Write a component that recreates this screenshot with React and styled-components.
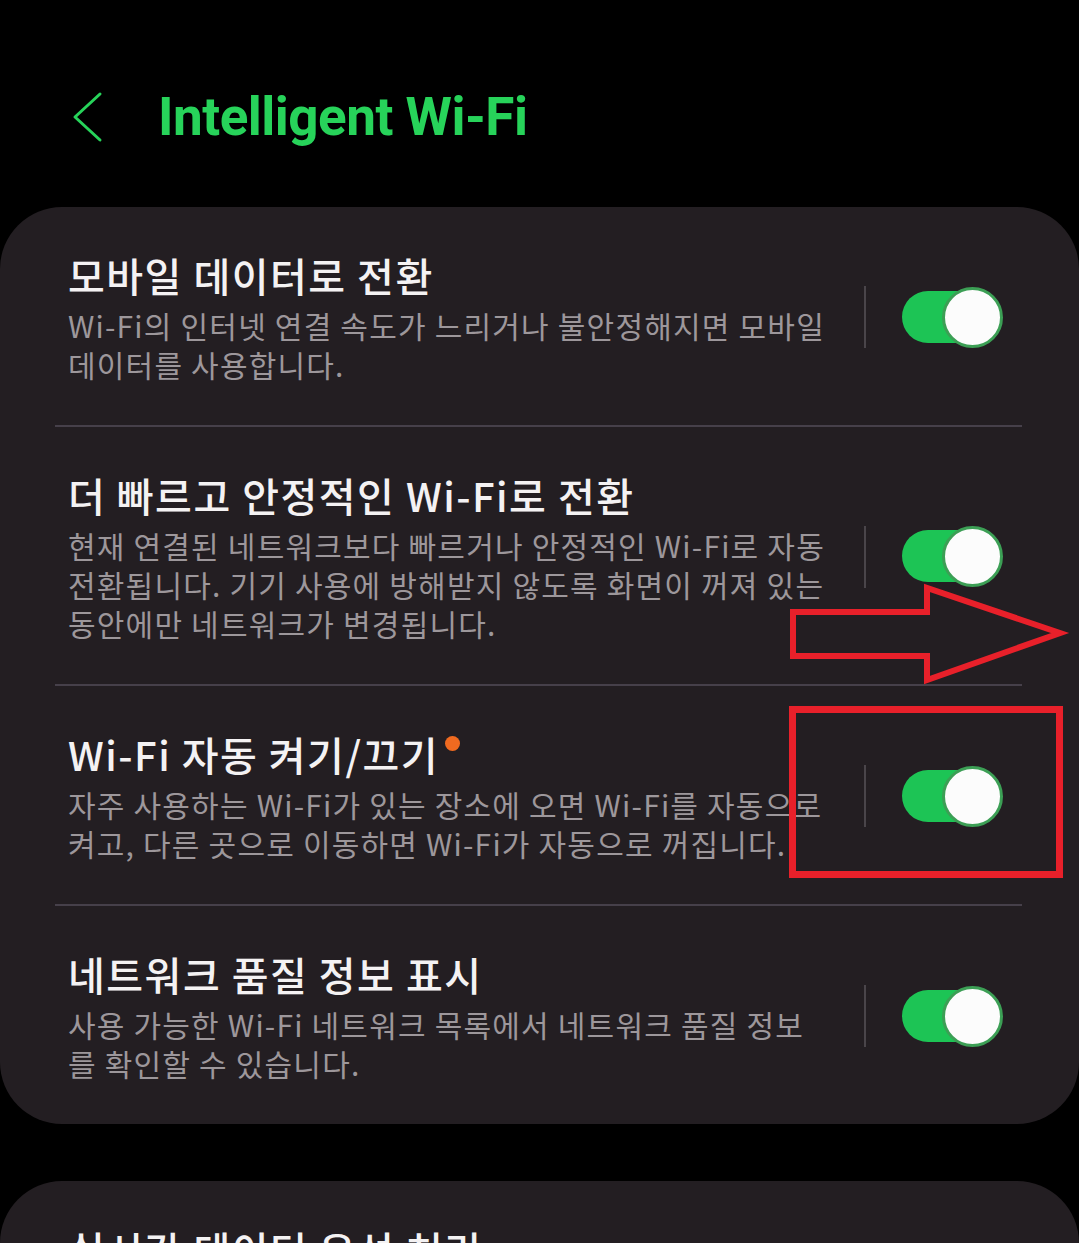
import React from 'react';
import styled, { createGlobalStyle } from 'styled-components';

const GlobalStyle = createGlobalStyle`
  html, body {
    margin: 0;
    padding: 0;
    background: #000;
    overflow: hidden;
  }
  body {
    font-family: 'Noto Sans CJK KR', 'Noto Sans', sans-serif;
  }
`;

const Page = styled.div`
  position: relative;
  width: 1079px;
  height: 1243px;
  overflow: hidden;
  background: #000;
`;

const Header = styled.div`
  display: flex;
  align-items: center;
  height: 74px;
  padding: 80px 0 0 70px;
  margin-bottom: 53px;
`;

const BackButton = styled.div`
  display: flex;
  align-items: center;
  width: 34px;
  height: 52px;
  margin-right: 54px;
`;

const Title = styled.h1`
  margin: 0;
  font-family: Roboto, 'Liberation Sans', sans-serif;
  font-weight: 700;
  font-size: 53px;
  line-height: 74px;
  letter-spacing: -0.5px;
  color: #27d35a;
`;

const Card = styled.div`
  background: #231e22;
  border-radius: 62px;
  min-height: ${(props) => (props.tall ? '0' : '200px')};
`;

const CardGap = styled.div`
  height: 57px;
`;

const Row = styled.div`
  display: flex;
  align-items: center;
  padding: 43px 76px 41px 68px;
`;

const TextBlock = styled.div`
  flex: 1;
  display: flex;
  flex-direction: column;
  white-space: nowrap;
`;

const RowTitle = styled.div`
  font-size: 40px;
  line-height: 50px;
  font-weight: 500;
  letter-spacing: 1.5px;
  color: #f4f2f3;
  margin-bottom: 6px;
`;

const Badge = styled.span`
  display: inline-block;
  position: relative;
  top: -20px;
  width: 15px;
  height: 15px;
  margin-left: 6px;
  border-radius: 50%;
  background: #f06a20;
`;

const SubLine = styled.div`
  font-size: 30px;
  line-height: 39px;
  letter-spacing: 1.2px;
  color: #9d979b;
`;

const Separator = styled.div`
  width: 2px;
  height: 62px;
  background: #4a454a;
  margin-right: 36px;
`;

const Switch = styled.div`
  position: relative;
  width: 101px;
  height: 61px;
  flex-shrink: 0;
`;

const Track = styled.div`
  position: absolute;
  left: 0;
  top: 4px;
  width: 92px;
  height: 52px;
  border-radius: 26px;
  background: ${(props) => (props.on ? '#1dc455' : '#5a5558')};
`;

const Thumb = styled.div`
  position: absolute;
  top: 0;
  right: 0;
  width: 55px;
  height: 55px;
  border-radius: 50%;
  background: #fcfcfc;
  border: 3px solid #3c9f55;
`;

const Divider = styled.div`
  height: 2px;
  margin: 0 57px 0 55px;
  background: #46404a;
`;

const Annotations = styled.svg`
  position: absolute;
  left: 0;
  top: 0;
  pointer-events: none;
`;

const settings = [
  {
    title: '모바일 데이터로 전환',
    lines: [
      'Wi-Fi의 인터넷 연결 속도가 느리거나 불안정해지면 모바일',
      '데이터를 사용합니다.',
    ],
  },
  {
    title: '더 빠르고 안정적인 Wi-Fi로 전환',
    lines: [
      '현재 연결된 네트워크보다 빠르거나 안정적인 Wi-Fi로 자동',
      '전환됩니다. 기기 사용에 방해받지 않도록 화면이 꺼져 있는',
      '동안에만 네트워크가 변경됩니다.',
    ],
  },
  {
    title: 'Wi-Fi 자동 켜기/끄기',
    badge: true,
    lines: [
      '자주 사용하는 Wi-Fi가 있는 장소에 오면 Wi-Fi를 자동으로',
      '켜고, 다른 곳으로 이동하면 Wi-Fi가 자동으로 꺼집니다.',
    ],
  },
  {
    title: '네트워크 품질 정보 표시',
    lines: [
      '사용 가능한 Wi-Fi 네트워크 목록에서 네트워크 품질 정보',
      '를 확인할 수 있습니다.',
    ],
  },
];

const Toggle = ({ on }) => (
  <Switch>
    <Track on={on ? 1 : 0} />
    <Thumb />
  </Switch>
);

export default function App() {
  return (
    <>
      <GlobalStyle />
      <Page>
        <Header>
          <BackButton>
            <svg width="34" height="52" viewBox="0 0 34 52">
              <path
                d="M30 3 L5 26 L30 49"
                fill="none"
                stroke="#27d35a"
                strokeWidth="3"
                strokeLinecap="round"
                strokeLinejoin="round"
              />
            </svg>
          </BackButton>
          <Title>Intelligent Wi-Fi</Title>
        </Header>

        <Card tall>
          {settings.map((item, index) => (
            <React.Fragment key={index}>
              {index > 0 && <Divider />}
              <Row>
                <TextBlock>
                  <RowTitle>
                    {item.title}
                    {item.badge && <Badge />}
                  </RowTitle>
                  {item.lines.map((line, i) => (
                    <SubLine key={i}>{line}</SubLine>
                  ))}
                </TextBlock>
                <Separator />
                <Toggle on />
              </Row>
            </React.Fragment>
          ))}
        </Card>

        <CardGap />

        <Card>
          <Row>
            <TextBlock>
              <RowTitle>실시간 데이터 우선 처리</RowTitle>
            </TextBlock>
          </Row>
        </Card>

        {/* red markup drawn on top of the screenshot */}
        <Annotations width="1079" height="1243" viewBox="0 0 1079 1243">
          <polygon
            points="793,612 927,612 927,588 1060,633 927,680 927,656 793,656"
            fill="none"
            stroke="#e8202a"
            strokeWidth="6"
            strokeLinejoin="miter"
          />
          <rect
            x="792.5"
            y="709.5"
            width="267"
            height="165"
            fill="none"
            stroke="#e8202a"
            strokeWidth="7"
          />
        </Annotations>
      </Page>
    </>
  );
}
